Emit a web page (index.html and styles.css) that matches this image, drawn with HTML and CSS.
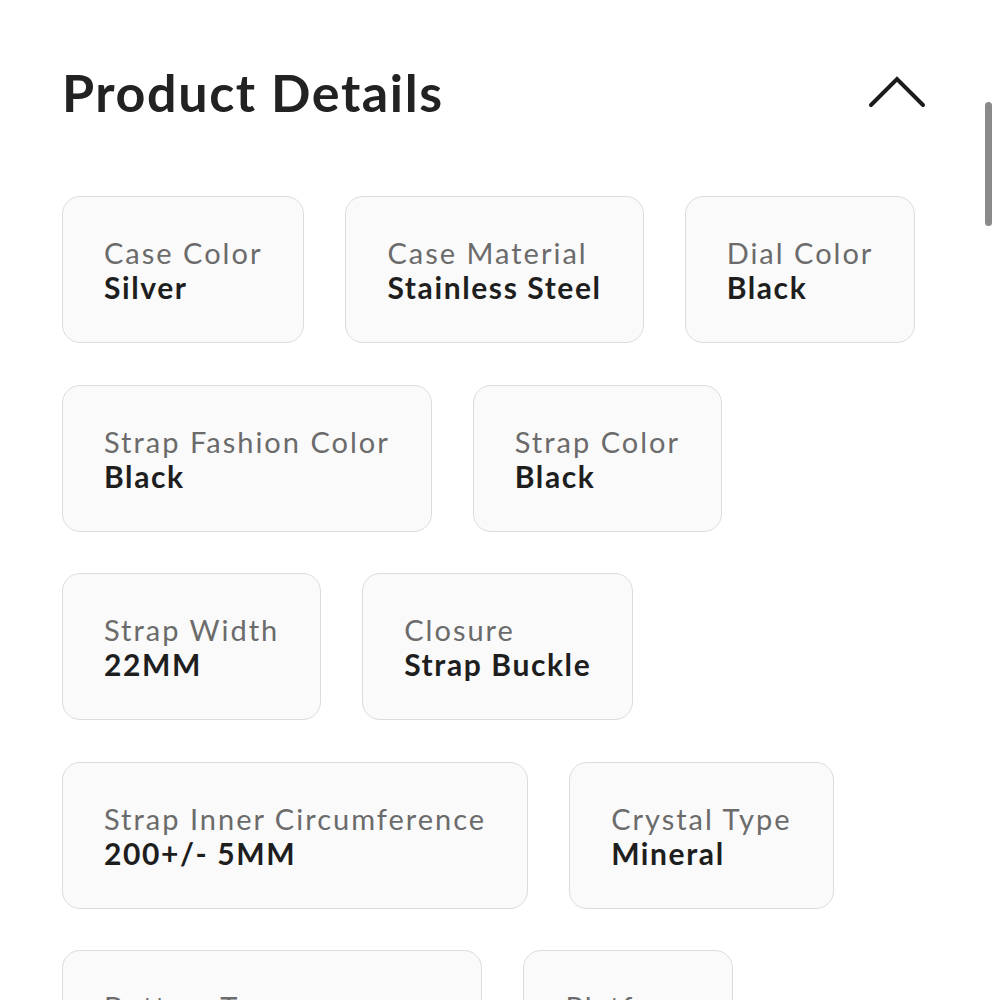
FILE: index.html
```html
<!DOCTYPE html>
<html lang="en">
<head>
<meta charset="utf-8">
<title>Product Details</title>
<link rel="stylesheet" href="styles.css">
</head>
<body>
<div class="page">
  <div class="header">
    <h1 class="title">Product Details</h1>
    <svg class="chevron" width="60" height="32" viewBox="0 0 60 32" aria-hidden="true">
      <polyline points="3,29 29,3 55,29" fill="none" stroke="#1c1c1c" stroke-width="4" stroke-linecap="round" stroke-linejoin="miter"/>
    </svg>
  </div>
  <div class="grid">
    <div class="card"><div class="label">Case Color</div><div class="value">Silver</div></div>
    <div class="card"><div class="label">Case Material</div><div class="value">Stainless Steel</div></div>
    <div class="card"><div class="label">Dial Color</div><div class="value">Black</div></div>
    <div class="card"><div class="label">Strap Fashion Color</div><div class="value">Black</div></div>
    <div class="card"><div class="label">Strap Color</div><div class="value">Black</div></div>
    <div class="card"><div class="label">Strap Width</div><div class="value">22MM</div></div>
    <div class="card"><div class="label">Closure</div><div class="value">Strap Buckle</div></div>
    <div class="card"><div class="label">Strap Inner Circumference</div><div class="value">200+/- 5MM</div></div>
    <div class="card"><div class="label">Crystal Type</div><div class="value">Mineral</div></div>
    <div class="card"><div class="label">Bottom Type</div><div class="value">Stainless Steel Snap-In</div></div>
    <div class="card"><div class="label">Platform</div><div class="value">Quartz</div></div>
  </div>
</div>
<div class="scrollbar"></div>
</body>
</html>
```
FILE: styles.css
```css
html, body {
  margin: 0;
  padding: 0;
  height: 100%;
  overflow: hidden;
  background: #ffffff;
}
body {
  font-family: Lato, "Noto Sans", sans-serif;
  color: #222222;
}
.page {
  padding: 62px 72px 0 62px;
  width: 866px;
}
.header {
  display: flex;
  justify-content: space-between;
  align-items: center;
  height: 60px;
}
.title {
  margin: 0;
  font-size: 52px;
  line-height: 60px;
  font-weight: 700;
  letter-spacing: 1.6px;
  color: #222222;
}
.chevron {
  display: block;
}
.grid {
  margin-top: 74px;
  display: flex;
  flex-wrap: wrap;
  gap: 41.5px 41px;
}
.card {
  background: #fafafa;
  border: 1px solid #dcdcdc;
  border-radius: 18px;
  padding: 39px 41px 38px 41px;
  font-size: 29px;
  line-height: 34px;
  white-space: nowrap;
}
.label {
  color: #6b6b6b;
  letter-spacing: 2px;
}
.value {
  font-weight: 700;
  font-size: 30px;
  color: #1e1e1e;
  letter-spacing: 1.6px;
}
.scrollbar {
  position: fixed;
  top: 102px;
  right: 8px;
  width: 7px;
  height: 124px;
  border-radius: 4px;
  background: #8a8a8a;
}
```
